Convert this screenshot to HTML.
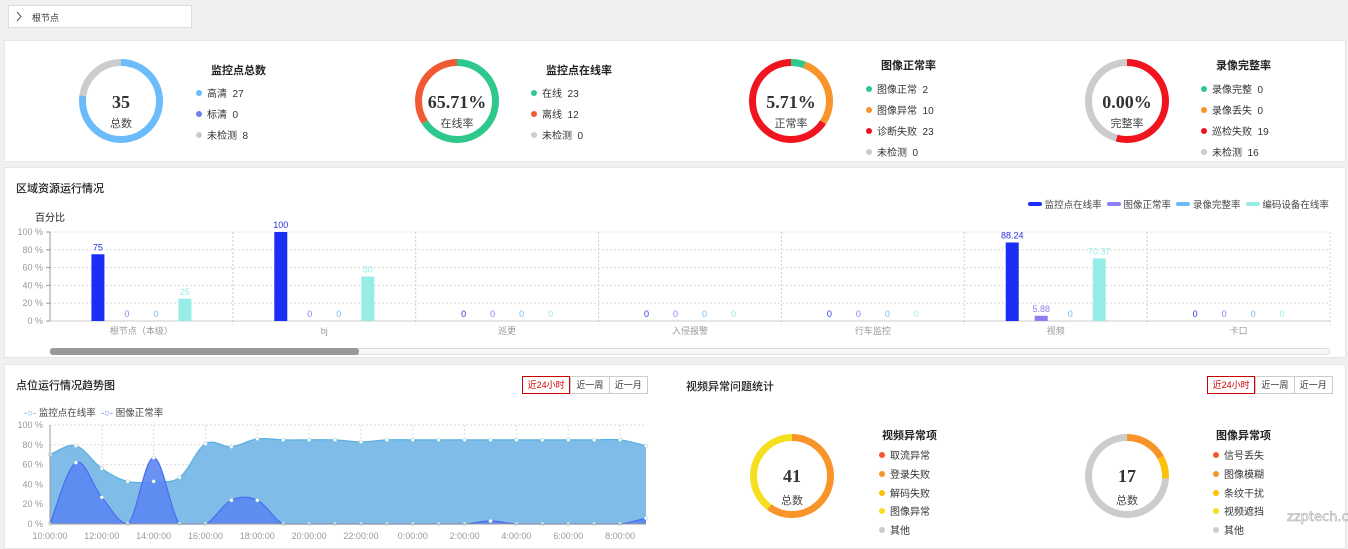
<!DOCTYPE html>
<html><head><meta charset="utf-8"><style>
*{margin:0;padding:0;box-sizing:border-box}
body{width:1348px;height:544px;background:#f0f0f0;font-family:"Liberation Sans","Noto Sans CJK SC",sans-serif;font-size:10px;color:#333;position:relative;overflow:hidden}
.abs{position:absolute;white-space:nowrap}
.panel{position:absolute;background:#fff;border:1px solid #e6e6e6}
.t{font-weight:bold;font-size:11px;color:#222}
.dot{display:inline-block;width:6px;height:6px;border-radius:50%;margin-right:5px;vertical-align:1px}
.big{font-family:"Liberation Serif",serif;font-weight:bold;font-size:18px;color:#333;text-align:center;width:120px}
.sub{font-size:11px;color:#444;text-align:center;width:120px}
.btns{position:absolute;display:flex;height:18px;border:1px solid #ccc;font-size:9px;width:126px}
.btns div{line-height:16px;border-left:1px solid #ccc;color:#333;text-align:center;width:39px}
.btns div:first-child{border:1px solid #c00;color:#c00;margin:-1px 0 -1px -1px;width:49px}
</style></head><body>
<div class="abs" style="left:8px;top:5px;width:184px;height:23px;background:#fff;border:1px solid #ddd"></div>
<svg class="abs" style="left:15px;top:11px" width="8" height="11"><path d="M2 1 L6 5.5 L2 10" fill="none" stroke="#555" stroke-width="1"/></svg>
<div class="abs" style="left:32px;top:11px;font-size:9px;color:#333">根节点</div>

<div class="panel" style="left:4px;top:40px;width:1342px;height:122px"></div>
<div class="panel" style="left:4px;top:167px;width:1342px;height:191px"></div>
<div class="panel" style="left:4px;top:364px;width:1342px;height:185px"></div>

<svg class="abs" style="left:0;top:0" width="1348" height="544" id="sv"></svg>

<div class="abs big" style="left:61px;top:92px">35</div><div class="abs sub" style="left:61px;top:115px">总数</div>
<div class="abs big" style="left:397px;top:92px">65.71%</div><div class="abs sub" style="left:397px;top:115px">在线率</div>
<div class="abs big" style="left:731px;top:92px">5.71%</div><div class="abs sub" style="left:731px;top:115px">正常率</div>
<div class="abs big" style="left:1067px;top:92px">0.00%</div><div class="abs sub" style="left:1067px;top:115px">完整率</div>

<div class="abs t" style="left:211px;top:62px">监控点总数</div>
<div class="abs" style="left:196px;top:85px"><span class="dot" style="background:#6cbcfb"></span>高清&nbsp; 27</div>
<div class="abs" style="left:196px;top:106px"><span class="dot" style="background:#6f7fe6"></span>标清&nbsp; 0</div>
<div class="abs" style="left:196px;top:127px"><span class="dot" style="background:#ccc"></span>未检测&nbsp; 8</div>

<div class="abs t" style="left:546px;top:62px">监控点在线率</div>
<div class="abs" style="left:531px;top:85px"><span class="dot" style="background:#2ec78c"></span>在线&nbsp; 23</div>
<div class="abs" style="left:531px;top:106px"><span class="dot" style="background:#f05a32"></span>离线&nbsp; 12</div>
<div class="abs" style="left:531px;top:127px"><span class="dot" style="background:#ccc"></span>未检测&nbsp; 0</div>

<div class="abs t" style="left:881px;top:57px">图像正常率</div>
<div class="abs" style="left:866px;top:81px"><span class="dot" style="background:#2ec78c"></span>图像正常&nbsp; 2</div>
<div class="abs" style="left:866px;top:102px"><span class="dot" style="background:#f7952b"></span>图像异常&nbsp; 10</div>
<div class="abs" style="left:866px;top:123px"><span class="dot" style="background:#f0141e"></span>诊断失败&nbsp; 23</div>
<div class="abs" style="left:866px;top:144px"><span class="dot" style="background:#ccc"></span>未检测&nbsp; 0</div>

<div class="abs t" style="left:1216px;top:57px">录像完整率</div>
<div class="abs" style="left:1201px;top:81px"><span class="dot" style="background:#2ec78c"></span>录像完整&nbsp; 0</div>
<div class="abs" style="left:1201px;top:102px"><span class="dot" style="background:#f7952b"></span>录像丢失&nbsp; 0</div>
<div class="abs" style="left:1201px;top:123px"><span class="dot" style="background:#f0141e"></span>巡检失败&nbsp; 19</div>
<div class="abs" style="left:1201px;top:144px"><span class="dot" style="background:#ccc"></span>未检测&nbsp; 16</div>

<div class="abs t" style="left:16px;top:180px;font-weight:normal;font-size:11px;color:#222;text-shadow:0 0 0.4px #222">区域资源运行情况</div>
<div class="abs" style="left:35px;top:209px;color:#222">百分比</div>
<div class="abs" style="left:1028px;top:197px;font-size:9.5px;color:#444">
<span style="display:inline-block;width:14px;height:4px;border-radius:2px;background:#1b2ef5;vertical-align:2px"></span> 监控点在线率&nbsp;
<span style="display:inline-block;width:14px;height:4px;border-radius:2px;background:#8c80f0;vertical-align:2px"></span> 图像正常率&nbsp;
<span style="display:inline-block;width:14px;height:4px;border-radius:2px;background:#6cbcfb;vertical-align:2px"></span> 录像完整率&nbsp;
<span style="display:inline-block;width:14px;height:4px;border-radius:2px;background:#98ece6;vertical-align:2px"></span> 编码设备在线率</div>
<div class="abs" style="left:50px;top:348px;width:1280px;height:7px;border:1px solid #ddd;border-radius:3px;background:#f8f8f8"></div>
<div class="abs" style="left:50px;top:348px;width:309px;height:7px;border-radius:3px;background:#999"></div>

<div class="abs t" style="left:16px;top:377px;font-weight:normal;text-shadow:0 0 0.4px #222">点位运行情况趋势图</div>
<div class="btns" style="left:522px;top:376px"><div>近24小时</div><div>近一周</div><div>近一月</div></div>
<div class="abs" style="left:24px;top:405px;font-size:9.5px;color:#444"><span style="color:#5aaee0">-○-</span> 监控点在线率 &nbsp;<span style="color:#5b74f0">-○-</span> 图像正常率</div>

<div class="abs t" style="left:686px;top:378px;font-weight:normal;text-shadow:0 0 0.4px #222">视频异常问题统计</div>
<div class="btns" style="left:1207px;top:376px"><div>近24小时</div><div>近一周</div><div>近一月</div></div>

<div class="abs big" style="left:732px;top:466px">41</div><div class="abs sub" style="left:732px;top:492px">总数</div>
<div class="abs big" style="left:1067px;top:466px">17</div><div class="abs sub" style="left:1067px;top:492px">总数</div>

<div class="abs t" style="left:882px;top:427px">视频异常项</div>
<div class="abs" style="left:879px;top:447px"><span class="dot" style="background:#f05a32"></span>取流异常</div>
<div class="abs" style="left:879px;top:466px"><span class="dot" style="background:#f7952b"></span>登录失败</div>
<div class="abs" style="left:879px;top:485px"><span class="dot" style="background:#fcc10a"></span>解码失败</div>
<div class="abs" style="left:879px;top:503px"><span class="dot" style="background:#f5e020"></span>图像异常</div>
<div class="abs" style="left:879px;top:522px"><span class="dot" style="background:#ccc"></span>其他</div>

<div class="abs t" style="left:1216px;top:427px">图像异常项</div>
<div class="abs" style="left:1213px;top:447px"><span class="dot" style="background:#f05a32"></span>信号丢失</div>
<div class="abs" style="left:1213px;top:466px"><span class="dot" style="background:#f7952b"></span>图像模糊</div>
<div class="abs" style="left:1213px;top:485px"><span class="dot" style="background:#fcc10a"></span>条纹干扰</div>
<div class="abs" style="left:1213px;top:503px"><span class="dot" style="background:#f5e020"></span>视频遮挡</div>
<div class="abs" style="left:1213px;top:522px"><span class="dot" style="background:#ccc"></span>其他</div>
<div class="abs" style="left:1287px;top:510px;font-size:13px;color:#fff;-webkit-text-stroke:0.5px #999;font-family:'DejaVu Sans',sans-serif">zzptech.com</div>

<script>
var s='';
function donut(cx,cy,segs){var r=38.5,C=2*Math.PI*r,off=0;segs.forEach(function(g){var l=g[0]*C;s+='<circle cx="'+cx+'" cy="'+cy+'" r="'+r+'" fill="none" stroke="'+g[1]+'" stroke-width="7" stroke-dasharray="'+l+' '+(C-l)+'" stroke-dashoffset="'+(-off)+'" transform="rotate(-90 '+cx+' '+cy+')"/>';off+=l;});}
donut(121,101,[[27/35,'#6cbcfb'],[8/35,'#cccccc']]);
donut(457,101,[[0.6571,'#2ec78c'],[0.3429,'#f05a32']]);
donut(791,101,[[2/35,'#2ec78c'],[10/35,'#f7952b'],[23/35,'#f0141e']]);
donut(1127,101,[[19/35,'#f0141e'],[16/35,'#cccccc']]);
donut(792,476,[[0.6,'#f7952b'],[0.4,'#f5e020']]);
donut(1127,476,[[0.17,'#f7952b'],[0.09,'#fcc10a'],[0.74,'#cccccc']]);
var x0=50,x1=1330,yt=232,yb=321,h=yb-yt;
for(var i=0;i<=5;i++){var y=yb-i*h/5;s+='<text x="43" y="'+(y+3)+'" font-size="9" fill="#999" text-anchor="end">'+(i*20)+' %</text>';if(i>0)s+='<line x1="50" x2="1330" y1="'+y+'" y2="'+y+'" stroke="#ddd" stroke-dasharray="2,2"/>';s+='<line x1="46" x2="50" y1="'+y+'" y2="'+y+'" stroke="#999"/>';}
s+='<line x1="50" x2="50" y1="232" y2="321" stroke="#999"/><line x1="50" x2="1330" y1="321" y2="321" stroke="#ccc"/>';
var cats=['根节点（本级）','bj','巡更','入侵报警','行车监控','视频','卡口'];
var data=[[75,0,0,25],[100,0,0,50],[0,0,0,0],[0,0,0,0],[0,0,0,0],[88.24,5.88,0,70.37],[0,0,0,0]];
var cols=['#1b2ef5','#8c80f0','#6cbcfb','#98ece6'],lc=['#2435d8','#8c80f0','#6cbcfb','#98ece6'];
var cw=(x1-x0)/7;
cats.forEach(function(c,k){var cx=x0+cw*(k+0.5),xe=x0+cw*(k+1);s+='<line x1="'+xe+'" x2="'+xe+'" y1="232" y2="325" stroke="#ccc" stroke-dasharray="2,2"/>';
s+='<text x="'+cx+'" y="334" font-size="9" fill="#999" text-anchor="middle">'+c+'</text>';
[-43.5,-14.5,14.5,43.5].forEach(function(o,j){var v=data[k][j],bx=cx+o,bh=v/100*h;if(v>0)s+='<rect x="'+(bx-6.5)+'" y="'+(yb-bh)+'" width="13" height="'+bh+'" fill="'+cols[j]+'"/>';s+='<text x="'+bx+'" y="'+(yb-bh-4)+'" font-size="9" fill="'+lc[j]+'" text-anchor="middle">'+v+'</text>';});});
var lx0=50,lx1=646,ly0=425,ly1=524,lh=ly1-ly0,st=(lx1-lx0)/23;
for(var i=0;i<=5;i++){var y=ly1-i*lh/5;s+='<text x="43" y="'+(y+3)+'" font-size="9" fill="#999" text-anchor="end">'+(i*20)+' %</text>';s+='<line x1="50" x2="646" y1="'+y+'" y2="'+y+'" stroke="#ddd" stroke-dasharray="2,2"/>';}
var labs=['10:00:00','12:00:00','14:00:00','16:00:00','18:00:00','20:00:00','22:00:00','0:00:00','2:00:00','4:00:00','6:00:00','8:00:00'];
labs.forEach(function(l,k){var x=lx0+st*2*k;s+='<line x1="'+x+'" x2="'+x+'" y1="425" y2="524" stroke="#ddd" stroke-dasharray="2,2"/><text x="'+x+'" y="539" font-size="9" fill="#999" text-anchor="middle">'+l+'</text>';});
var on=[70,79,56,43,43,47,81,78,86,85,85,85,83,85,85,85,85,85,85,85,85,85,85,79];
var im=[0,62,27,0,67,0,0,24,24,0,0,0,0,0,0,0,0,3,0,0,0,0,0,6];
function pts(a){return a.map(function(v,i){return [lx0+st*i,ly1-v/100*lh];});}
function curve(p){var d='M'+p[0][0]+','+p[0][1];for(var i=0;i<p.length-1;i++){var a=p[i-1]||p[i],b=p[i],c=p[i+1],e=p[i+2]||c,t=0.35;
var c1=[b[0]+(c[0]-a[0])*t/2,b[1]+(c[1]-a[1])*t/2],c2=[c[0]-(e[0]-b[0])*t/2,c[1]-(e[1]-b[1])*t/2];
c1[1]=Math.min(c1[1],ly1);c2[1]=Math.min(c2[1],ly1);d+=' C'+c1+' '+c2+' '+c;}return d;}
var p1=pts(on),p2=pts(im);
s+='<path d="'+curve(p1)+' L646,524 L50,524Z" fill="#7fbde8"/><path d="'+curve(p1)+'" fill="none" stroke="#5aaee0" stroke-width="1.2"/>';
s+='<path d="'+curve(p2)+' L646,524 L50,524Z" fill="#5b86f2" fill-opacity="0.9"/><path d="'+curve(p2)+'" fill="none" stroke="#4a6cf0" stroke-width="1.2"/>';
p1.concat(p2).forEach(function(q){s+='<circle cx="'+q[0]+'" cy="'+q[1]+'" r="1.8" fill="#fff" stroke="#9cc" stroke-width="0.5"/>';});
s+='<line x1="50" x2="50" y1="425" y2="524" stroke="#999"/><line x1="50" x2="646" y1="524" y2="524" stroke="#999"/>';
document.getElementById('sv').innerHTML=s;
</script>
</body></html>
